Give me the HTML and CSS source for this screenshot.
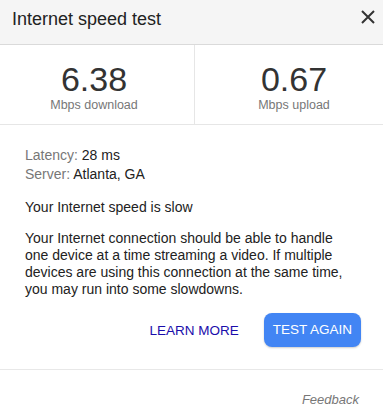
FILE: index.html
```html
<!DOCTYPE html>
<html>
<head>
<meta charset="utf-8">
<link rel="stylesheet" href="styles.css">
</head>
<body>
<div class="panel">
  <div class="header">
    <div class="title">Internet speed test</div>
    <svg class="close" width="14" height="14" viewBox="0 0 14 14"><path d="M1 1L13 13M13 1L1 13" stroke="#333" stroke-width="2" fill="none"/></svg>
  </div>
  <div class="stats">
    <div class="stat stat-left">
      <div class="num">6.38</div>
      <div class="unit">Mbps download</div>
    </div>
    <div class="divider"></div>
    <div class="stat stat-right">
      <div class="num">0.67</div>
      <div class="unit">Mbps upload</div>
    </div>
  </div>
  <div class="details">
    <div class="meta"><span class="label">Latency:</span> 28 ms</div>
    <div class="meta"><span class="label">Server:</span> Atlanta, GA</div>
    <div class="verdict">Your Internet speed is slow</div>
    <div class="desc">Your Internet connection should be able to handle one device at a time streaming a video. If multiple devices are using this connection at the same time, you may run into some slowdowns.</div>
    <div class="actions">
      <span class="learn">LEARN MORE</span>
      <span class="again">TEST AGAIN</span>
    </div>
  </div>
  <div class="footer">
    <span class="feedback">Feedback</span>
  </div>
</div>
</body>
</html>
```
FILE: styles.css
```css
html, body {
  margin: 0;
  padding: 0;
  background: #fff;
}
.panel {
  width: 383px;
  font-family: "Liberation Sans", Arial, sans-serif;
  color: #222;
}
.header {
  height: 45px;
  box-sizing: border-box;
  background: #f5f5f5;
  border-bottom: 1px solid #dadada;
  display: flex;
  justify-content: space-between;
  align-items: flex-start;
  padding: 9px 8px 0 12px;
}
.title {
  font-size: 18px;
  line-height: 20px;
  color: #222;
}
.close {
  margin-top: 1px;
}
.stats {
  display: flex;
  border-bottom: 1px solid #e6e6e6;
  height: 80px;
  box-sizing: border-box;
}
.stat {
  text-align: center;
  padding-top: 15px;
}
.stat-left {
  width: 194px;
  box-sizing: border-box;
  padding-right: 6px;
}
.stat-right {
  flex: 1;
  padding-left: 10px;
}
.divider {
  width: 1px;
  background: #e6e6e6;
}
.num {
  font-size: 34px;
  line-height: 38px;
  color: #333;
}
.unit {
  font-size: 12.5px;
  line-height: 15px;
  color: #777;
}
.details {
  padding: 21px 22px 0 25px;
  font-size: 14px;
}
.meta {
  line-height: 19px;
}
.label {
  color: #777;
}
.verdict {
  margin-top: 15px;
  line-height: 17px;
}
.desc {
  margin-top: 14px;
  line-height: 17px;
  padding-right: 3px;
}
.actions {
  margin-top: 15px;
  display: flex;
  justify-content: flex-end;
  align-items: center;
  height: 34px;
}
.learn {
  color: #1a0dab;
  font-size: 13.5px;
  margin-right: 25px;
}
.again {
  background: #4285f4;
  color: #fff;
  font-size: 13.5px;
  line-height: 34px;
  height: 34px;
  padding: 0 9px;
  border-radius: 8px;
  box-shadow: 0 1px 2px rgba(0,0,0,0.2);
}
.footer {
  margin-top: 22px;
  border-top: 1px solid #e8e8e8;
  padding: 20px 24px 0 0;
  text-align: right;
}
.feedback {
  font-style: italic;
  font-size: 13px;
  line-height: 15px;
  color: #777;
}
```
